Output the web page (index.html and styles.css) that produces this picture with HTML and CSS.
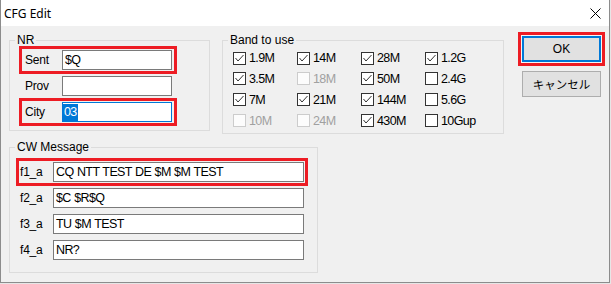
FILE: index.html
```html
<!DOCTYPE html>
<html lang="ja">
<head>
    <meta charset="utf-8">
    <title>CFG Edit</title>
    <link rel="stylesheet" href="styles.css">
</head>
<body>
<div class="window">
    <div class="titlebar">
        <span class="title">CFG Edit</span>
        <svg class="close" width="11" height="11" viewBox="0 0 11 11">
            <path d="M0.5 0.5 L10.5 10.5 M10.5 0.5 L0.5 10.5" stroke="#000" stroke-width="1" fill="none"/>
        </svg>
    </div>
    <div class="client">
        <div class="top">
            <fieldset class="group nr">
                <legend>NR</legend>
                <div class="row mark"><span class="lbl">Sent</span><div class="edit">$Q</div></div>
                <div class="row"><span class="lbl">Prov</span><div class="edit"></div></div>
                <div class="row mark"><span class="lbl">City</span><div class="edit focus"><span class="sel">03</span></div></div>
            </fieldset>

            <fieldset class="group band">
                <legend>Band to use</legend>
                <div class="checks">
                    <label class="chk on"><span class="box"><svg width="11" height="11" viewBox="0 0 11 11"><polyline points="1.5,5 4,8 9.5,2" /></svg></span>1.9M</label>
                    <label class="chk on"><span class="box"><svg width="11" height="11" viewBox="0 0 11 11"><polyline points="1.5,5 4,8 9.5,2" /></svg></span>14M</label>
                    <label class="chk on"><span class="box"><svg width="11" height="11" viewBox="0 0 11 11"><polyline points="1.5,5 4,8 9.5,2" /></svg></span>28M</label>
                    <label class="chk on"><span class="box"><svg width="11" height="11" viewBox="0 0 11 11"><polyline points="1.5,5 4,8 9.5,2" /></svg></span>1.2G</label>

                    <label class="chk on"><span class="box"><svg width="11" height="11" viewBox="0 0 11 11"><polyline points="1.5,5 4,8 9.5,2" /></svg></span>3.5M</label>
                    <label class="chk disabled"><span class="box"></span>18M</label>
                    <label class="chk on"><span class="box"><svg width="11" height="11" viewBox="0 0 11 11"><polyline points="1.5,5 4,8 9.5,2" /></svg></span>50M</label>
                    <label class="chk"><span class="box"></span>2.4G</label>

                    <label class="chk on"><span class="box"><svg width="11" height="11" viewBox="0 0 11 11"><polyline points="1.5,5 4,8 9.5,2" /></svg></span>7M</label>
                    <label class="chk on"><span class="box"><svg width="11" height="11" viewBox="0 0 11 11"><polyline points="1.5,5 4,8 9.5,2" /></svg></span>21M</label>
                    <label class="chk on"><span class="box"><svg width="11" height="11" viewBox="0 0 11 11"><polyline points="1.5,5 4,8 9.5,2" /></svg></span>144M</label>
                    <label class="chk"><span class="box"></span>5.6G</label>

                    <label class="chk disabled"><span class="box"></span>10M</label>
                    <label class="chk disabled"><span class="box"></span>24M</label>
                    <label class="chk on"><span class="box"><svg width="11" height="11" viewBox="0 0 11 11"><polyline points="1.5,5 4,8 9.5,2" /></svg></span>430M</label>
                    <label class="chk"><span class="box"></span>10Gup</label>
                </div>
            </fieldset>

            <div class="buttons">
                <div class="mark-btn"><button class="btn default">OK</button></div>
                <button class="btn cancel">キャンセル</button>
            </div>
        </div>

        <fieldset class="group cw">
            <legend>CW Message</legend>
            <div class="row mark"><span class="lbl">f1_a</span><div class="edit">CQ NTT TEST DE $M $M TEST</div></div>
            <div class="row"><span class="lbl">f2_a</span><div class="edit">$C $R$Q</div></div>
            <div class="row"><span class="lbl">f3_a</span><div class="edit">TU $M TEST</div></div>
            <div class="row"><span class="lbl">f4_a</span><div class="edit">NR?</div></div>
        </fieldset>
    </div>
</div>
</body>
</html>
```

FILE: styles.css
```css
body {
    margin: 0;
    background-color: #e6e6e6;
    font-family: "Liberation Sans", Arial, sans-serif;
    font-size: 12px;
    color: #000;
}

.window {
    width: 610px;
    height: 283px;
    box-sizing: border-box;
    border: 1px solid #8c8c8c;
    border-top: none;
    background-color: #f0f0f0;
    display: flex;
    flex-direction: column;
}

.titlebar {
    height: 26px;
    flex: none;
    background-color: #fff;
    display: flex;
    align-items: center;
    padding-left: 3px;
}

.title {
    font-family: "Noto Sans", sans-serif;
    font-size: 12px;
}

.close {
    margin-left: auto;
    margin-right: 8px;
}

.client {
    padding: 8px 0 0 8px;
}

.top {
    display: flex;
    align-items: flex-start;
}

/* group boxes */
.group {
    margin: 0;
    min-width: 0;
    box-sizing: border-box;
    border: 1px solid #dcdcdc;
}

.group legend {
    padding: 0 2px;
    font-size: 12px;
    line-height: 12px;
}

.nr {
    width: 201px;
    padding: 0 0 4px 9px;
}

.nr legend {
    margin-left: -4px;
}

.band {
    width: 282px;
    margin-left: 12px;
    padding: 2px 0 2px 10px;
}

.band legend {
    margin-left: -5px;
}

.cw {
    width: 309px;
    margin-top: 7px;
    padding: 5px 9px 8px 6px;
}

.cw legend {
    margin-left: -1px;
}

/* label + edit rows */
.row {
    display: flex;
    align-items: center;
    height: 28px;
    box-sizing: border-box;
    border: 3px solid transparent;
    margin-bottom: -2px;
}

.row:last-child {
    margin-bottom: 0;
}

.row.mark {
    border-color: #ed1c24;
}

.nr .row {
    width: 158px;
    padding-left: 3px;
}

.nr .lbl {
    width: 37px;
}

.nr .edit {
    width: 110px;
}

.cw .row {
    width: 292px;
    padding-left: 1px;
}

.cw .lbl {
    width: 33px;
}

.cw .edit {
    width: 251px;
}

.lbl {
    flex: none;
    letter-spacing: -0.2px;
}

.edit {
    flex: none;
    height: 20px;
    box-sizing: border-box;
    border: 1px solid #7a7a7a;
    background-color: #fff;
    padding: 0 2px;
    font-size: 12.5px;
    line-height: 18px;
    white-space: nowrap;
    overflow: hidden;
    letter-spacing: -0.6px;
    word-spacing: 0.5px;
}

.edit.focus {
    border-color: #0078d7;
    padding-left: 0;
}

.sel {
    display: inline-block;
    background-color: #0078d7;
    color: #fff;
    line-height: 17px;
    padding: 0 1px;
    vertical-align: top;
    margin-top: 0.5px;
}

/* checkboxes */
.checks {
    display: grid;
    grid-template-columns: repeat(4, 64px);
    grid-template-rows: 20px 21px 21px 21px;
}

.chk {
    display: flex;
    align-items: center;
    gap: 3px;
    font-size: 12.5px;
    letter-spacing: -0.6px;
}

.box {
    width: 13px;
    height: 13px;
    box-sizing: border-box;
    border: 1px solid #333;
    background-color: #fff;
    display: flex;
}

.box polyline {
    fill: none;
    stroke: #333;
    stroke-width: 1;
}

.chk.disabled {
    color: #a0a0a0;
}

.chk.disabled .box {
    border-color: #cccccc;
    background-color: #fcfcfc;
}

/* buttons */
.buttons {
    margin-left: 14px;
    margin-top: -2px;
    display: flex;
    flex-direction: column;
    align-items: flex-start;
}

.mark-btn {
    border: 3px solid #ed1c24;
    padding: 1px;
    background-color: #f6f6f6;
}

.btn {
    width: 79px;
    height: 26px;
    box-sizing: border-box;
    border: 1px solid #adadad;
    background-color: #e1e1e1;
    padding: 0;
    margin: 0;
    font-family: "Liberation Sans", Arial, sans-serif;
    font-size: 12px;
    color: #000;
}

.btn.default {
    border: 2px solid #0078d7;
}

.btn.cancel {
    margin: 5px 0 0 4px;
    font-family: "Noto Sans CJK JP", sans-serif;
    font-size: 11.5px;
}
```
